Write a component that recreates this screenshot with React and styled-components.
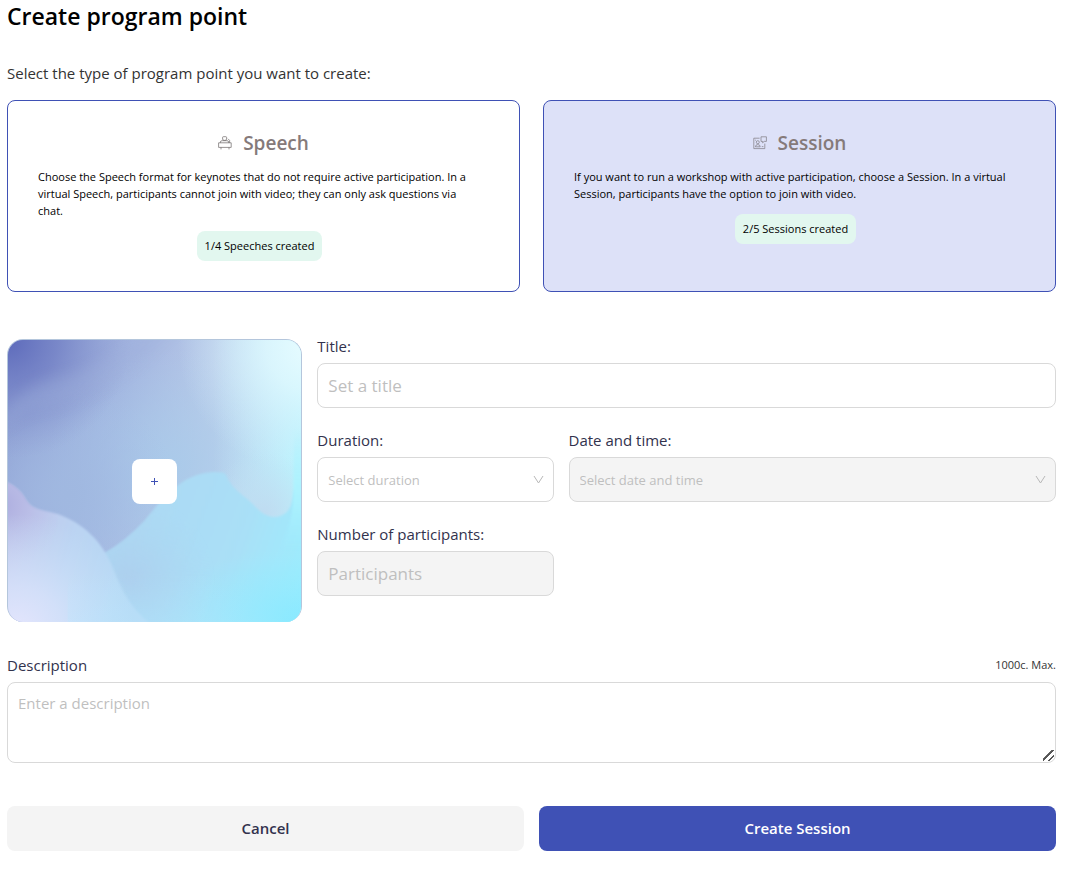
import React, { useState } from "react";
import styled, { createGlobalStyle } from "styled-components";

const types = [
  {
    id: "speech",
    name: "Speech",
    text: "Choose the Speech format for keynotes that do not require active participation. In a virtual Speech, participants cannot join with video; they can only ask questions via chat.",
    created: "1/4 Speeches created",
    Icon: SpeechIcon,
  },
  {
    id: "session",
    name: "Session",
    text: "If you want to run a workshop with active participation, choose a Session. In a virtual Session, participants have the option to join with video.",
    created: "2/5 Sessions created",
    Icon: SessionIcon,
  },
];

function SpeechIcon() {
  return (
    <svg width="14" height="14" viewBox="0 0 14 14" fill="none" stroke="#6b6666" strokeWidth="0.7" aria-hidden="true">
      <path d="M4.6 1.4Q4.6 0.7 5.4 0.7H7.8Q8.6 0.7 8.6 1.4V3.2Q8.6 4.4 6.6 4.4T4.6 3.2Z" />
      <path d="M2.4 6.8V6Q2.4 4.7 4.2 4.7H9Q10.6 4.7 10.6 6V6.8M10 2.8L11.6 4.4V6.8" />
      <path d="M0.6 6.8H13.2V11.4H0.6ZM3 11.4V13.4M11 11.4V13.4" />
    </svg>
  );
}

function SessionIcon() {
  return (
    <svg width="14" height="14" viewBox="0 0 14 14" fill="none" stroke="#7d7880" strokeWidth="0.7" aria-hidden="true">
      <path d="M6.6 2.2H0.8V12.6H11.8V7.6" />
      <path d="M8 0.8H13.4V5.4H11.2L9.6 6.8V5.4H8Z" />
      <circle cx="4.8" cy="6.2" r="1.5" />
      <path d="M2.4 10.8Q2.4 8.6 4.8 8.6T7.2 10.8ZM8.8 10.6H10.4M2.2 4.2H3" />
    </svg>
  );
}

function Chevron() {
  return (
    <svg width="11" height="11" viewBox="0 0 11 11" fill="none" stroke="#b8b8b8" aria-hidden="true">
      <path d="M1 2L5.5 9L10 2" />
    </svg>
  );
}

const WAVE =
  "M96 214Q118 202 138 180C158 155 178 132 208 132Q217 132 219 134Q223 146 238 157C248 164 255 177 268 177Q285 176 287 155L288 150H310V300H90Z";

function CoverArt() {
  return (
    <svg viewBox="0 0 295 283" preserveAspectRatio="none" aria-hidden="true">
      <defs>
        <linearGradient id="base" x1="0" y1="0" x2="1" y2="0.2">
          <stop offset="0" stopColor="#8c9cd1" />
          <stop offset="0.4" stopColor="#a2b3df" />
          <stop offset="0.7" stopColor="#b9cbe9" />
          <stop offset="1" stopColor="#c6e0f4" />
        </linearGradient>
        <radialGradient id="mid" cx="0.55" cy="0.45" r="0.42">
          <stop offset="0" stopColor="#a9cbea" stopOpacity="0.9" />
          <stop offset="1" stopColor="#a9cbea" stopOpacity="0" />
        </radialGradient>
        <radialGradient id="valley" gradientUnits="userSpaceOnUse" cx="60" cy="155" r="110">
          <stop offset="0" stopColor="#a0b8e0" />
          <stop offset="1" stopColor="#a4c0e6" stopOpacity="0" />
        </radialGradient>
        <radialGradient id="corner" cx="0" cy="0" r="0.42">
          <stop offset="0" stopColor="#5d6abb" />
          <stop offset="0.4" stopColor="#7482c6" stopOpacity="0.85" />
          <stop offset="1" stopColor="#8c9cd2" stopOpacity="0" />
        </radialGradient>
        <radialGradient id="glow" cx="1.04" cy="0.02" r="0.46">
          <stop offset="0" stopColor="#e8fcff" />
          <stop offset="0.35" stopColor="#e0f8fe" stopOpacity="0.8" />
          <stop offset="1" stopColor="#d0ecfa" stopOpacity="0" />
        </radialGradient>
        <linearGradient id="side" x1="0.7" y1="0" x2="1.02" y2="0">
          <stop offset="0" stopColor="#c6effb" stopOpacity="0" />
          <stop offset="1" stopColor="#b8f6ff" />
        </linearGradient>
        <radialGradient id="blush" gradientUnits="userSpaceOnUse" cx="258" cy="172" r="60">
          <stop offset="0" stopColor="#bfdcf1" />
          <stop offset="1" stopColor="#bfdff2" stopOpacity="0" />
        </radialGradient>
        <linearGradient id="wave" x1="0.1" y1="0.5" x2="1" y2="0.75">
          <stop offset="0" stopColor="#add8f3" />
          <stop offset="0.55" stopColor="#a9e0f7" />
          <stop offset="1" stopColor="#9aefff" />
        </linearGradient>
        <linearGradient id="drop" gradientUnits="userSpaceOnUse" x1="0" y1="90" x2="0" y2="210">
          <stop offset="0" stopColor="#aef3fe" stopOpacity="0" />
          <stop offset="0.45" stopColor="#aef3fe" />
          <stop offset="0.6" stopColor="#aaf1fe" />
          <stop offset="1" stopColor="#a2f0fe" stopOpacity="0" />
        </linearGradient>
        <radialGradient id="cyan" cx="1" cy="1" r="0.5">
          <stop offset="0" stopColor="#79e9ff" />
          <stop offset="1" stopColor="#9cecff" stopOpacity="0" />
        </radialGradient>
        <radialGradient id="shade" gradientUnits="userSpaceOnUse" cx="122" cy="240" r="85">
          <stop offset="0" stopColor="#adcfee" />
          <stop offset="1" stopColor="#acd8f2" stopOpacity="0" />
        </radialGradient>
        <linearGradient id="hill" gradientUnits="userSpaceOnUse" x1="0" y1="215" x2="110" y2="245">
          <stop offset="0" stopColor="#c3c6ea" />
          <stop offset="0.5" stopColor="#bbd3f2" />
          <stop offset="1" stopColor="#b8daf5" />
        </linearGradient>
        <radialGradient id="hillGlow" gradientUnits="userSpaceOnUse" cx="8" cy="294" r="120">
          <stop offset="0" stopColor="#e6e6fd" />
          <stop offset="0.4" stopColor="#d8e3fb" stopOpacity="0.8" />
          <stop offset="1" stopColor="#c8e4fa" stopOpacity="0" />
        </radialGradient>
        <radialGradient id="violet" gradientUnits="userSpaceOnUse" cx="-10" cy="165" r="65">
          <stop offset="0" stopColor="#a6a6db" stopOpacity="0.85" />
          <stop offset="1" stopColor="#b9bce8" stopOpacity="0" />
        </radialGradient>
        <linearGradient id="floor" x1="0" y1="0" x2="0" y2="1">
          <stop offset="0.82" stopColor="#b5e9ff" stopOpacity="0" />
          <stop offset="1" stopColor="#b5e9ff" stopOpacity="0.9" />
        </linearGradient>
        <filter id="soft" x="-10%" y="-10%" width="120%" height="120%">
          <feGaussianBlur stdDeviation="1.2" />
        </filter>
        <filter id="softer" x="-20%" y="-20%" width="140%" height="140%">
          <feGaussianBlur stdDeviation="7" />
        </filter>
      </defs>
      <rect width="295" height="283" fill="url(#base)" />
      <rect width="295" height="283" fill="url(#mid)" />
      <rect width="295" height="283" fill="url(#valley)" />
      <rect width="295" height="283" fill="url(#corner)" />
      <path d="M-10 90Q8 45 50 38T140 -10V-30H180Q110 60 20 70Z" fill="#9eb0dc" opacity="0.35" filter="url(#softer)" />
      <rect width="295" height="283" fill="url(#side)" />
      <rect width="295" height="283" fill="url(#glow)" />
      <rect width="295" height="283" fill="url(#blush)" />
      <path d={WAVE} fill="url(#wave)" filter="url(#soft)" />
      <path d="M288 90H310V210H275Q288 180 287 145Z" fill="url(#drop)" filter="url(#soft)" />
      <rect y="130" width="295" height="153" fill="url(#cyan)" />
      <path d={WAVE} fill="url(#shade)" filter="url(#soft)" />
      <path
        d="M-5 140Q12 148 17 158C24 171 36 170 50 174C78 184 94 203 103 222C112 242 118 268 152 290H-5Z"
        fill="url(#hill)"
        filter="url(#soft)"
      />
      <path d="M-5 140Q12 148 17 158C24 171 36 170 50 174V232H-5Z" fill="url(#violet)" />
      <rect y="160" width="295" height="123" fill="url(#hillGlow)" />
      <rect x="60" width="235" height="283" fill="url(#floor)" opacity="0.3" />
    </svg>
  );
}

function App() {
  const [type, setType] = useState("session");

  return (
    <Page>
      <GlobalStyle />
      <h1>Create program point</h1>
      <Intro id="type-intro">Select the type of program point you want to create:</Intro>
      <Types role="group" aria-labelledby="type-intro">
        {types.map(({ id, name, text, created, Icon }) => (
          <TypeCard
            key={id}
            type="button"
            $active={id === type}
            aria-pressed={id === type}
            onClick={() => setType(id)}
          >
            <TypeName>
              <Icon />
              {name}
            </TypeName>
            <TypeBody>
              <TypeText>{text}</TypeText>
              <Badge>{created}</Badge>
            </TypeBody>
          </TypeCard>
        ))}
      </Types>
      <form onSubmit={(e) => e.preventDefault()}>
        <Details>
          <Cover>
            <CoverArt />
            <AddButton type="button" aria-label="Add image">
              <svg width="9" height="9" viewBox="0 0 9 9" stroke="#3f51b5" aria-hidden="true">
                <path d="M4.5 1V8M1 4.5H8" />
              </svg>
            </AddButton>
          </Cover>
          <Fields>
            <Field $span={3}>
              <Label htmlFor="title">Title:</Label>
              <Input id="title" placeholder="Set a title" />
            </Field>
            <Field>
              <Label htmlFor="duration">Duration:</Label>
              <SelectBox>
                <Select id="duration" defaultValue="">
                  <option value="">Select duration</option>
                </Select>
                <Chevron />
              </SelectBox>
            </Field>
            <Field $span={2}>
              <Label htmlFor="date">Date and time:</Label>
              <SelectBox>
                <Select id="date" defaultValue="" disabled>
                  <option value="">Select date and time</option>
                </Select>
                <Chevron />
              </SelectBox>
            </Field>
            <Field>
              <Label htmlFor="participants">Number of participants:</Label>
              <Input id="participants" placeholder="Participants" disabled />
            </Field>
          </Fields>
        </Details>
        <DescriptionHead>
          <Label htmlFor="description">Description</Label>
          <small>1000c. Max.</small>
        </DescriptionHead>
        <TextArea id="description" maxLength={1000} placeholder="Enter a description" />
        <Actions>
          <Button type="button">Cancel</Button>
          <Button type="submit" $primary>
            Create {type === "session" ? "Session" : "Speech"}
          </Button>
        </Actions>
      </form>
    </Page>
  );
}

const GlobalStyle = createGlobalStyle`
  * {
    box-sizing: border-box;
  }
  body {
    margin: 0;
    background: #fff;
    color: #000;
    font-family: "Open Sans", "Noto Sans", sans-serif;
  }
  button, input, select, textarea {
    font-family: inherit;
  }
`;

const Page = styled.main`
  padding: 0 16px 18px 7px;
  h1 {
    margin: 0;
    font-size: 23px;
    line-height: 32px;
    font-weight: 600;
  }
`;

const Intro = styled.p`
  margin: 31px 0 17px;
  font-size: 15px;
  line-height: 20px;
  color: #333;
`;

const Types = styled.div`
  display: grid;
  grid-template-columns: repeat(2, 1fr);
  gap: 23px;
`;

const TypeCard = styled.button`
  display: flex;
  flex-direction: column;
  align-items: center;
  gap: 13px;
  min-height: 192px;
  padding: 30px;
  border: 1px solid #3f51b5;
  border-radius: 8px;
  background: ${({ $active }) => ($active ? "#dde1f8" : "#fff")};
  color: #000;
  cursor: pointer;
`;

const TypeName = styled.span`
  display: flex;
  align-items: center;
  gap: 11px;
  font-size: 19px;
  line-height: 24px;
  font-weight: 600;
  color: #857a7a;
`;

const TypeBody = styled.span`
  display: flex;
  flex-direction: column;
  align-items: center;
  gap: 12px;
  width: 100%;
  padding-right: 8px;
  font-size: 11px;
`;

const TypeText = styled.span`
  width: 100%;
  line-height: 17px;
  text-align: left;
`;

const Badge = styled.span`
  padding: 0 8px;
  border-radius: 8px;
  background: #e2f7ef;
  line-height: 30px;
`;

const Details = styled.div`
  display: grid;
  grid-template-columns: repeat(24, minmax(0, 1fr));
  column-gap: 15px;
  margin-top: 44px;
`;

const Cover = styled.div`
  grid-column: span 7;
  display: grid;
  place-items: center;
  height: 283px;
  margin-top: 3px;
  border-radius: 16px;
  border: 1px solid #b4c6dc;
  border-bottom: 0;
  overflow: hidden;
  > * {
    grid-area: 1 / 1;
  }
  > svg {
    display: block;
    width: 100%;
    height: 283px;
  }
`;

const AddButton = styled.button`
  display: grid;
  place-items: center;
  width: 45px;
  height: 45px;
  z-index: 1;
  padding: 0;
  border: 0;
  border-radius: 8px;
  background: #fff;
  cursor: pointer;
`;

const Fields = styled.div`
  grid-column: span 17;
  display: grid;
  grid-template-columns: repeat(3, minmax(0, 1fr));
  align-content: start;
  gap: 22px 15px;
`;

const Field = styled.div`
  grid-column: span ${({ $span }) => $span || 1};
  display: flex;
  flex-direction: column;
  gap: 7px;
`;

const Label = styled.label`
  font-size: 15px;
  line-height: 20px;
  color: #32324d;
`;

const Input = styled.input`
  width: 100%;
  height: 45px;
  padding: 0 10px;
  border: 1px solid #d9d9d9;
  border-radius: 8px;
  background: #fff;
  font-size: 17px;
  &::placeholder {
    color: #bfbfbf;
  }
  &:disabled {
    background: #f4f4f4;
  }
`;

const SelectBox = styled.div`
  position: relative;
  svg {
    position: absolute;
    top: 17px;
    right: 10px;
    pointer-events: none;
  }
`;

const Select = styled(Input).attrs({ as: "select" })`
  appearance: none;
  color: #bfbfbf;
  font-size: 13px;
  &:disabled {
    opacity: 1;
  }
`;

const DescriptionHead = styled.div`
  display: flex;
  align-items: center;
  justify-content: space-between;
  margin-top: 33px;
  small {
    font-size: 11px;
    line-height: 20px;
    color: #333;
  }
`;

const TextArea = styled.textarea`
  display: block;
  width: 100%;
  height: 81px;
  margin-top: 7px;
  padding: 9px 10px;
  border: 1px solid #d9d9d9;
  border-radius: 8px;
  font-size: 15px;
  line-height: 22px;
  resize: vertical;
  &::placeholder {
    color: #bfbfbf;
  }
  &::-webkit-resizer {
    background: linear-gradient(
        135deg,
        transparent 40%,
        #555 41% 50%,
        transparent 51% 69%,
        #555 70% 79%,
        transparent 80%
      )
      3px 3px / 11px 11px no-repeat;
  }
`;

const Actions = styled.div`
  display: grid;
  grid-template-columns: repeat(2, 1fr);
  gap: 15px;
  margin-top: 43px;
`;

const Button = styled.button`
  height: 45px;
  padding: 0 16px 2px;
  border: 0;
  border-radius: 8px;
  background: ${({ $primary }) => ($primary ? "#3f51b5" : "#f4f4f4")};
  color: ${({ $primary }) => ($primary ? "#fff" : "#32324d")};
  font-size: 15px;
  font-weight: 600;
  cursor: pointer;
`;

export default App;
